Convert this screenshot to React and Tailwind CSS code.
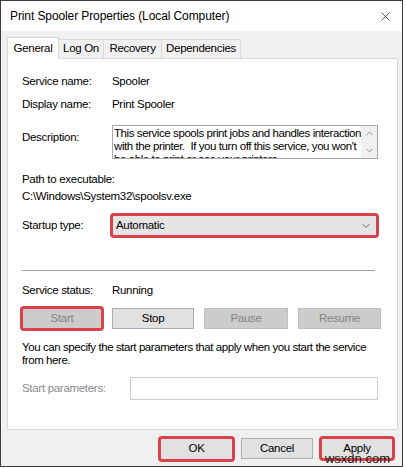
import { ChevronDown, ChevronUp, X } from "lucide-react";

const font = { fontFamily: '"Liberation Sans", Arial, sans-serif' };

function RedMark() {
  return <span className="pointer-events-none absolute -inset-[3px] rounded-[4px] border-[3px] border-[#d8434b]" />;
}

function Btn({ children, disabled, marked, w = "w-[80px]" }) {
  return (
    <div
      className={`relative flex h-[21px] ${w} items-center justify-center border ${
        disabled ? "border-[#bfbfbf] bg-[#cccccc] text-[#838383]" : "border-[#adadad] bg-[#e1e1e1] text-black"
      }`}
    >
      {children}
      {marked && <RedMark />}
    </div>
  );
}

function Tab({ label, active, w }) {
  if (active) {
    return (
      <div className="relative z-10 -mb-px flex h-[22px] w-[52px] items-center justify-center border border-b-0 border-[#d9d9d9] bg-white">
        {label}
      </div>
    );
  }
  return (
    <div className={`flex h-[19px] ${w} items-center justify-center border border-b-0 border-l-0 border-[#d9d9d9] bg-[#f0f0f0]`}>
      {label}
    </div>
  );
}

export default function App() {
  return (
    <div className="h-[468px] w-[406px] bg-white text-[11.5px] tracking-[-0.3px] text-black" style={font}>
      <div className="flex h-[467px] w-[403px] flex-col border border-[#3c3c3c] bg-[#f0f0f0]">
        {/* title bar */}
        <div className="flex h-[30px] items-center justify-between bg-white pl-[9px] pr-[9px]">
          <span className="text-[12px] tracking-[-0.1px]">Print Spooler Properties (Local Computer)</span>
          <X size={15} strokeWidth={1} className="text-black" />
        </div>

        <div className="px-[6px] pt-[6px]">
          {/* tabs */}
          <div className="flex items-end">
            <Tab label="General" active />
            <Tab label="Log On" w="w-[45px]" />
            <Tab label="Recovery" w="w-[58px]" />
            <Tab label="Dependencies" w="w-[79px]" />
          </div>

          {/* panel */}
          <div className="flex h-[372px] w-[391px] flex-col border border-[#d9d9d9] bg-white px-[14px] pt-[15px]">
            <div className="flex h-[16px] items-center">
              <span className="w-[90px]">Service name:</span>
              <span>Spooler</span>
            </div>
            <div className="mt-[7px] flex h-[16px] items-center">
              <span className="w-[90px]">Display name:</span>
              <span>Print Spooler</span>
            </div>
            <div className="mt-[12px] flex items-start">
              <span className="mt-[4px] w-[90px]">Description:</span>
              <div className="flex h-[34px] w-[266px] overflow-hidden border border-[#a8a8a8]">
                <div className="flex-1 overflow-hidden whitespace-nowrap pl-[1px] pt-[1px] leading-[13px] tracking-[-0.42px]">
                  This service spools print jobs and handles interaction
                  <br />
                  with the printer.&nbsp; If you turn off this service, you won't
                  <br />
                  be able to print or see your printers.
                </div>
                <div className="flex w-[16px] flex-col items-center justify-between bg-[#f0f0f0] py-[2px]">
                  <ChevronUp size={11} strokeWidth={1.5} className="text-[#606060]" />
                  <ChevronDown size={11} strokeWidth={1.5} className="text-[#606060]" />
                </div>
              </div>
            </div>
            <div className="mt-[12px] h-[16px] leading-[16px]">Path to executable:</div>
            <div className="mt-[1px] h-[16px] leading-[16px]">C:\Windows\System32\spoolsv.exe</div>
            <div className="mt-[11px] flex items-center">
              <span className="w-[90px]">Startup type:</span>
              <div className="relative flex h-[21px] w-[265px] items-center justify-between border border-[#adadad] bg-[#e5e5e5] pl-[3px] pr-[4px]">
                <span>Automatic</span>
                <ChevronDown size={12} strokeWidth={1.5} className="text-[#404040]" />
                <RedMark />
              </div>
            </div>

            <div className="mt-[34px] h-px w-[353px] bg-[#a0a0a0]" />

            <div className="mt-[12px] flex h-[16px] items-center">
              <span className="w-[90px]">Service status:</span>
              <span>Running</span>
            </div>
            <div className="mt-[9px] flex gap-[10px]">
              <Btn disabled marked>Start</Btn>
              <Btn w="w-[82px]">Stop</Btn>
              <Btn disabled w="w-[84px]">Pause</Btn>
              <Btn disabled w="w-[83px]">Resume</Btn>
            </div>
            <div className="mt-[12px] whitespace-nowrap leading-[13px] tracking-[-0.43px]">
              You can specify the start parameters that apply when you start the service
              <br />
              from here.
            </div>
            <div className="mt-[10px] flex items-center">
              <span className="w-[108px] text-[#8a8a8a]">Start parameters:</span>
              <div className="h-[23px] w-[248px] border border-[#cccccc] bg-white" />
            </div>
          </div>

          {/* footer */}
          <div className="relative mt-[8px] flex justify-end gap-[8px] pr-[3px]">
            <div className="relative flex h-[22px] w-[73px] items-center justify-center border border-[#0078d7] bg-[#e1e1e1]">
              OK
              <RedMark />
            </div>
            <Btn w="w-[72px]">Cancel</Btn>
            <Btn w="w-[72px]" marked>Apply</Btn>
            <span className="absolute right-[6px] top-[14px] text-[13px] leading-[14px] tracking-normal text-[#1a1a1a]">wsxdn.com</span>
          </div>
        </div>
      </div>
    </div>
  );
}
